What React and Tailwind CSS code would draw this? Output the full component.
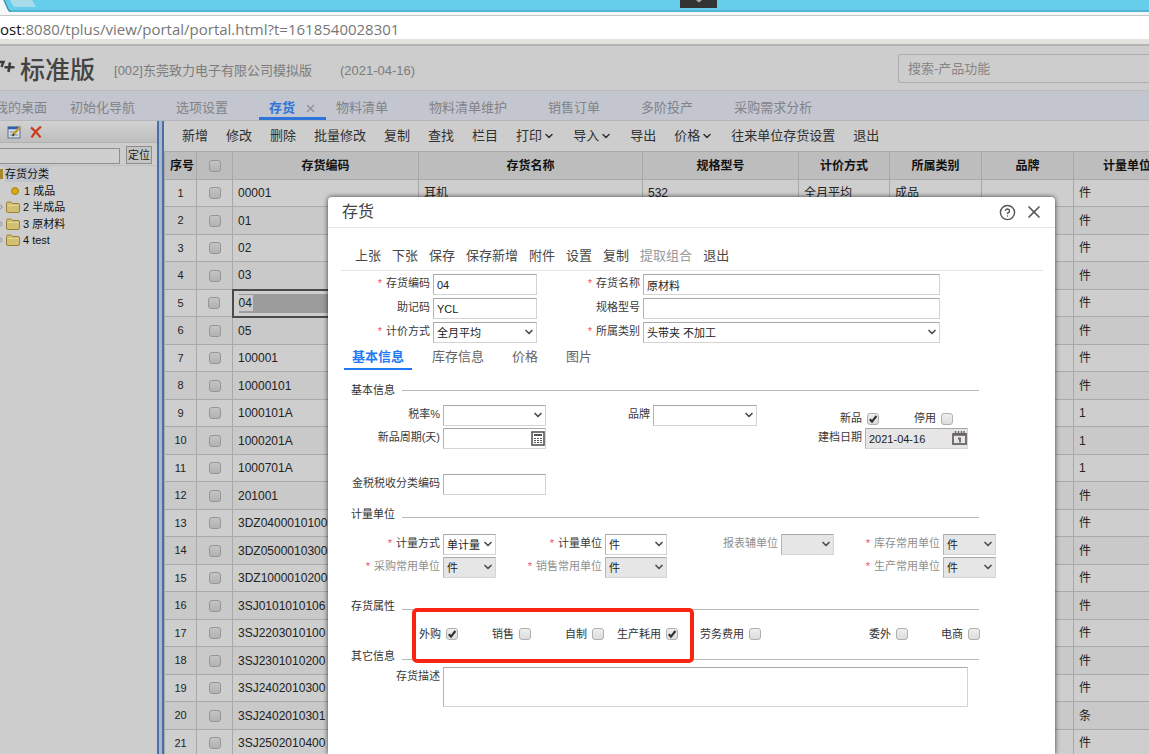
import { ChevronDown, CircleHelp, X } from 'lucide-react';
import clsx from 'clsx';

const openTabs = ['初始化导航', '选项设置', '存货', '物料清单', '物料清单维护', '销售订单', '多阶投产', '采购需求分析'];

const listActions = [
  { label: '新增' },
  { label: '修改' },
  { label: '删除' },
  { label: '批量修改' },
  { label: '复制' },
  { label: '查找' },
  { label: '栏目' },
  { label: '打印', menu: true },
  { label: '导入', menu: true },
  { label: '导出' },
  { label: '价格', menu: true },
  { label: '往来单位存货设置' },
  { label: '退出' },
];

const columns = ['存货编码', '存货名称', '规格型号', '计价方式', '所属类别', '品牌', '计量单位'];

const rows = [
  { code: '00001', name: '耳机', spec: '532', method: '全月平均', category: '成品', unit: '件' },
  { code: '01', unit: '件' },
  { code: '02', unit: '件' },
  { code: '03', unit: '件' },
  { code: '04', unit: '件', editing: true },
  { code: '05', unit: '件' },
  { code: '100001', unit: '件' },
  { code: '10000101', unit: '件' },
  { code: '1000101A', unit: '1' },
  { code: '1000201A', unit: '1' },
  { code: '1000701A', unit: '1' },
  { code: '201001', unit: '件' },
  { code: '3DZ0400010100', unit: '件' },
  { code: '3DZ0500010300', unit: '件' },
  { code: '3DZ1000010200', unit: '件' },
  { code: '3SJ0101010106', unit: '件' },
  { code: '3SJ2203010100', unit: '件' },
  { code: '3SJ2301010200', unit: '件' },
  { code: '3SJ2402010300', unit: '件' },
  { code: '3SJ2402010301', unit: '条' },
  { code: '3SJ2502010400', unit: '件' },
];

const dialogActions = ['上张', '下张', '保存', '保存新增', '附件', '设置', '复制', '提取组合', '退出'];

const attributes = [
  { id: 'buy', label: '外购', checked: true },
  { id: 'sell', label: '销售' },
  { id: 'make', label: '自制' },
  { id: 'consume', label: '生产耗用', checked: true },
  { id: 'service', label: '劳务费用' },
  { id: 'outsource', label: '委外' },
  { id: 'ecommerce', label: '电商' },
];

const Checkbox = ({ id, checked = false, dim = false, ...rest }) => (
  <span className="relative inline-block size-3 shrink-0">
    <input
      id={id}
      type="checkbox"
      defaultChecked={checked}
      className={clsx(
        'peer block size-3 appearance-none rounded-[3px] border',
        dim
          ? 'border-[#969696] bg-linear-to-b from-[#c4c4c4] to-[#b2b2b2]'
          : 'border-[#b0b0b0] bg-linear-to-b from-[#efefef] to-[#dcdcdc]'
      )}
      {...rest}
    />
    <svg
      viewBox="0 0 12 12"
      className="pointer-events-none absolute inset-0 hidden size-3 peer-checked:block"
      fill="none"
      stroke="#333"
      strokeWidth="2.2"
    >
      <path d="M2.8 6.2 5 8.6 9.4 3" />
    </svg>
  </span>
);

const Label = ({ htmlFor, required, muted, children }) => (
  <label
    htmlFor={htmlFor}
    className={clsx('text-right leading-[18px] whitespace-nowrap', muted ? 'text-[#8f8f8f]' : 'text-[#3a3a3a]')}
  >
    {required && <span className="mr-1 text-[#f0506a]">*</span>}
    {children}
  </label>
);

const fieldBox =
  'h-[21px] w-full rounded-none border border-t-[#a8a8a8] border-l-[#b4b4b4] border-r-[#d4d4d4] border-b-[#d4d4d4] pl-[3px] text-[#222] outline-none';

const TextField = ({ id, label, required, value = '' }) => (
  <>
    <Label htmlFor={id} required={required}>{label}</Label>
    <input id={id} type="text" defaultValue={value} className={clsx(fieldBox, 'bg-white')} />
  </>
);

const SelectField = ({ id, label, required, value = '', muted, disabled }) => (
  <>
    <Label htmlFor={id} required={required} muted={muted}>{label}</Label>
    <span className="relative block">
      <select
        id={id}
        disabled={disabled}
        defaultValue={value}
        className={clsx(fieldBox, 'block appearance-none pt-[2px] opacity-100', disabled ? 'bg-[#e6e6e6]' : 'bg-white')}
      >
        <option value={value}>{value}</option>
      </select>
      <ChevronDown
        size={12}
        strokeWidth={3.5}
        className="pointer-events-none absolute top-1 right-[2px] text-[#505050]"
      />
    </span>
  </>
);

const SectionTitle = ({ low, children }) => (
  <div className="mr-[76px] ml-[23px] flex h-4 items-center gap-[7px] text-[#333]">
    <h3 className="leading-4">{children}</h3>
    <span className={clsx('h-px flex-1 bg-[#b8b8b8]', low && 'mt-[6px]')} />
  </div>
);

const CalculatorIcon = () => (
  <svg viewBox="0 0 14 15" className="h-[15px] w-[14px]" fill="none" stroke="#555">
    <rect x="1" y="1" width="12" height="13" strokeWidth="1.6" />
    <path d="M3 4h8" strokeWidth="2" />
    <path d="M3 7.5h2M6 7.5h2M9 7.5h2M3 9.5h2M6 9.5h2M9 9.5h2M3 11.5h2M6 11.5h2M9 11.5h2" strokeWidth="1.2" />
  </svg>
);

const CalendarIcon = () => (
  <svg viewBox="0 0 15 14" className="h-[14px] w-[15px]" fill="none" stroke="#6b6464">
    <rect x="1" y="3" width="13" height="10" strokeWidth="1.8" />
    <path d="M1 3.5h13" strokeWidth="2.6" />
    <path d="M3.5 0v4M6.5 0v4M9.5 0v4M12 0v4" strokeWidth="1.4" />
    <path d="M6 7.5h2v4" strokeWidth="1.8" />
  </svg>
);

const FolderIcon = () => (
  <svg viewBox="0 0 14 12" className="h-3 w-3.5 shrink-0">
    <path
      d="M.5 10V2.5Q.5 1 2 1h3l1.5 1.5H12q1.5 0 1.5 1.5v6q0 1.5-1.5 1.5H2Q.5 11.5 .5 10Z"
      fill="#d3bf74"
      stroke="#9a8235"
    />
    <path d="M1.5 4.5h11" stroke="#e2d59c" />
  </svg>
);

const BrowserBar = () => (
  <div className="shrink-0 bg-[#f4f8f8]">
    <div className="relative h-3 border-b-2 border-[#55b3d6] bg-[#66cdea]">
      <svg viewBox="0 0 40 12" className="absolute top-0 left-0 h-3 w-10">
        <path d="M0 0h4l4 9q1 3 4 3H0Z" fill="#f4f8f8" />
        <path d="M4 0l4 9q1 2.500 3 2.500" fill="none" stroke="#4a93ad" strokeWidth="1.5" />
        <path d="M10 0h22l4 7H16q-3 0-4-3Z" fill="#a9dcea" />
      </svg>
      <div className="absolute top-0 left-[680px] flex h-2 w-[37px] justify-center bg-[#333]">
        <svg viewBox="0 0 8 4" className="h-1 w-2" fill="#aaa">
          <path d="M1 0h6L4 2.500Z" />
        </svg>
      </div>
    </div>
    <div className="mt-[3px] border-t border-[#c4c8ca] bg-white">
      <p className="h-[23px] font-[Open_Sans] text-[15px] leading-[26px] text-[#777]">
        <span className="text-[#111]">ost</span>:8080/tplus/view/portal/portal.html?t=1618540028301
      </p>
    </div>
    <div className="h-[5px] bg-[#e2e3df]" />
  </div>
);

const AppHeader = () => (
  <header className="flex h-[47px] shrink-0 items-center border-t-2 border-b border-t-[#b4b4b4] border-b-[#bdbdbd] bg-[#cdcdcd]">
    <svg viewBox="0 0 16 16" className="h-4 w-4 shrink-0" fill="none" stroke="#3d3d3d">
      <path d="M0 2h3.500L1.500 7" strokeWidth="2.4" />
      <path d="M10 2.500 8.500 12M4.500 7.200h10" strokeWidth="2.6" />
    </svg>
    <div className="ml-1 flex items-center pt-[3px] whitespace-nowrap">
      <h1 className="text-[25px] leading-8 font-medium text-[#444]">标准版</h1>
      <p className="ml-[19px] pt-[3px] text-[13px] text-[#7c7c7c]">[002]东莞致力电子有限公司模拟版</p>
      <p className="ml-7 pt-[3px] text-[13px] text-[#7c7c7c]">(2021-04-16)</p>
    </div>
    <input
      type="text"
      aria-label="搜索"
      placeholder="搜索-产品功能"
      className="ml-auto h-[29px] w-[251px] shrink-0 rounded-l-[3px] border border-r-0 border-[#aeaeae] pl-[9px] text-[13px] outline-none placeholder:text-[#858585]"
    />
  </header>
);

const TabStrip = () => (
  <nav className="flex h-[30px] shrink-0 overflow-hidden border-b border-[#b5b7bd] bg-[#c3c6cf] text-[13px] whitespace-nowrap text-[#818389]">
    <a href="#desktop" className="-ml-[5px] pt-[7px] pr-[13px] leading-5">我的桌面</a>
    {openTabs.map((tab) =>
      tab === '存货' ? (
        <div key={tab} className="flex gap-2 border-b-[3px] border-[#2f74d8] pt-[7px] pr-[9px] pl-2.5 leading-5">
          <a href="#inventory" className="font-bold text-[#2f74d8]">{tab}</a>
          <button type="button" aria-label="关闭" className="flex h-5 w-3.5 items-center justify-center text-[#8a8d94]">
            <X size={13} strokeWidth={2} />
          </button>
        </div>
      ) : (
        <a key={tab} href="#tab" className="pt-[7px] pr-[31px] pl-2.5 leading-5">{tab}</a>
      )
    )}
  </nav>
);

const treeRow = 'flex items-center odd:h-4 even:h-[17px]';

const Sidebar = () => (
  <aside className="w-[157px] shrink-0">
    <div className="flex h-[22px] items-center gap-2 border-b border-[#b2b2b2] bg-linear-to-b from-[#d2d2d2] to-[#bebebe] pl-[7px]">
      <button type="button" aria-label="修改分类">
        <svg viewBox="0 0 15 14" className="h-3.5 w-[15px]">
          <rect x="1" y="2" width="12" height="11" fill="#d6dbe2" stroke="#5d708c" />
          <path d="M1 3h12" stroke="#2c5fae" strokeWidth="2.5" />
          <path d="M3 7h5M3 10h8" stroke="#7d8ca2" />
          <path d="M6 10l7-8" stroke="#c29a2c" strokeWidth="2.2" />
          <path d="M5.5 11l1.5-2" stroke="#333" strokeWidth="1.5" />
        </svg>
      </button>
      <button type="button" aria-label="删除分类">
        <svg viewBox="0 0 12 12" className="size-3" fill="none" stroke="#c9401f" strokeWidth="2.2">
          <path d="M1 1.5Q6 5 10.5 11.5M11 .5Q5 5 1.5 11.5" />
        </svg>
      </button>
    </div>
    <form className="flex h-[23px] items-end justify-between border-b border-[#c0c0c0] pr-[5px] pb-px">
      <input
        type="text"
        aria-label="分类"
        className="h-4 w-[120px] border border-l-0 border-[#8e8e8e] bg-[#cfcfcf] outline-none"
      />
      <button
        type="button"
        className="h-[18px] border border-[#8e8e8e] bg-[#c4c4c4] px-px text-[11px] leading-4 text-[#222]"
      >
        定位
      </button>
    </form>
    <ul className="text-[11px] leading-4 text-[#111]">
      <li className={treeRow}>
        <span className="h-2.5 w-[3px] bg-[#a8872c]" />
        <span className="ml-0.5 bg-[#bfc3cb]">存货分类</span>
      </li>
      <li className={treeRow}>
        <span className="mr-[5px] ml-[11px] size-2 rounded-full border border-[#a8841a] bg-[#d6a90f]" />1 成品
      </li>
      {['2 半成品', '3 原材料', '4 test'].map((node) => (
        <li key={node} className={clsx(treeRow, 'gap-[3px]')}>
          <svg viewBox="0 0 3 6" className="h-1.5 w-[3px]" fill="none" stroke="#888">
            <path d="M0 .5 2.2 3 0 5.5" />
          </svg>
          <FolderIcon />
          {node}
        </li>
      ))}
    </ul>
  </aside>
);

const cell = 'overflow-hidden border border-[#a9a9a9] px-[5px] py-0 whitespace-nowrap';

const InventoryList = () => (
  <main className="min-w-0 flex-1 overflow-hidden">
    <div className="flex h-[30px] items-center gap-[18px] pl-[18px] text-[13px] whitespace-nowrap text-[#303030]">
      {listActions.map(({ label, menu }) => (
        <button key={label} type="button" className="flex items-center gap-px">
          {label}
          {menu && <ChevronDown size={12} strokeWidth={3} />}
        </button>
      ))}
    </div>
    <table className="w-[1016px] table-fixed border-collapse text-xs text-[#222]">
      <colgroup>
        <col className="w-8" />
        <col className="w-9" />
        <col className="w-[186px]" />
        <col className="w-[224px]" />
        <col className="w-[156px]" />
        <col className="w-[91px]" />
        <col className="w-[92px]" />
        <col className="w-[92px]" />
        <col className="w-[107px]" />
      </colgroup>
      <thead>
        <tr className="h-7 bg-[#bdbdbd] text-[#111]">
          <th className={clsx(cell, 'px-0')}>序号</th>
          <th className={cell}>
            <div className="flex justify-center"><Checkbox dim aria-label="全选" /></div>
          </th>
          {columns.map((name) => (
            <th key={name} className={cell}>{name}</th>
          ))}
        </tr>
      </thead>
      <tbody>
        {rows.map((row, i) => (
          <tr key={row.code} className="odd:h-[27px] odd:bg-[#cecece] even:h-7 even:bg-[#c9c9c9]">
            <td className={clsx(cell, 'text-center text-[11px]')}>{i + 1}</td>
            <td className={cell}>
              <div className="flex justify-center"><Checkbox dim aria-label={`选择 ${row.code}`} /></div>
            </td>
            {row.editing ? (
              <td className="border-2 border-[#4a4a4a] px-[5px] py-0">
                <div className="flex h-[19px] items-center bg-[#9c9c9c]">
                  <span className="bg-[#cacaca] pr-px">{row.code}</span>
                </div>
              </td>
            ) : (
              <td className={cell}>{row.code}</td>
            )}
            <td className={cell}>{row.name}</td>
            <td className={cell}>{row.spec}</td>
            <td className={cell}>{row.method}</td>
            <td className={cell}>{row.category}</td>
            <td className={cell} />
            <td className={cell}>{row.unit}</td>
          </tr>
        ))}
      </tbody>
    </table>
  </main>
);

const InventoryDialog = () => (
  <section
    role="dialog"
    aria-label="存货"
    className="absolute top-[197px] right-[94px] bottom-0 left-[328px] overflow-hidden rounded-t-[4px] bg-white text-[11px] shadow-[0_0_5px_rgba(0,0,0,0.7)]"
  >
    <header className="flex h-[31px] items-center border-b border-[#e6e6e6] pr-[11px] pl-[14px]">
      <h2 className="text-base text-[#444]">存货</h2>
      <div className="ml-auto flex items-center gap-2 text-[#555]">
        <button type="button" aria-label="帮助"><CircleHelp size={17} strokeWidth={2} /></button>
        <button type="button" aria-label="关闭"><X size={20} strokeWidth={2} /></button>
      </div>
    </header>

    <div className="mr-3 ml-[13px] flex h-[43px] items-end gap-[11px] border-b border-[#e6e6e6] pb-1 pl-[14px] text-[13px] leading-5 whitespace-nowrap text-[#484848]">
      {dialogActions.map((label) => (
        <button key={label} type="button" disabled={label === '提取组合'} className="disabled:text-[#999]">
          {label}
        </button>
      ))}
    </div>

    <div className="mt-[3px] grid grid-cols-[102px_104px_100px_297px] gap-x-[3px] gap-y-[3px]">
      <TextField id="code" label="存货编码" required value="04" />
      <TextField id="name" label="存货名称" required value="原材料" />
      <TextField id="mnemonic" label="助记码" value="YCL" />
      <TextField id="spec" label="规格型号" />
      <SelectField id="method" label="计价方式" required value="全月平均" />
      <SelectField id="category" label="所属类别" required value="头带夹 不加工" />
    </div>

    <nav className="mt-[2px] ml-4 flex h-[25px] gap-3 text-[13px] leading-6 text-[#666]">
      <a href="#basic" className="border-b-2 border-[#1f78f5] px-2 font-bold text-[#1f78f5]">基本信息</a>
      <a href="#stock" className="px-2">库存信息</a>
      <a href="#price" className="px-2">价格</a>
      <a href="#image" className="px-2">图片</a>
    </nav>

    <div className="mt-3">
      <SectionTitle>基本信息</SectionTitle>
      <div className="mt-[7px] grid grid-cols-[112px_103px_101px_104px_102px_103px] gap-x-[3px] gap-y-[2px]">
        <SelectField id="tax" label="税率%" />
        <SelectField id="brand" label="品牌" />
        <div className="col-span-2 flex items-end justify-end pr-[15px] pb-px text-[#333]">
          <label htmlFor="isNew" className="mr-[5px] leading-[14px]">新品</label>
          <Checkbox id="isNew" checked />
          <label htmlFor="disabled" className="mr-[5px] ml-[35px] leading-[14px]">停用</label>
          <Checkbox id="disabled" />
        </div>
        <Label htmlFor="period">新品周期(天)</Label>
        <span className="relative block">
          <input id="period" type="text" className={clsx(fieldBox, 'block bg-white')} />
          <button type="button" aria-label="计算器" className="absolute top-[3px] right-px"><CalculatorIcon /></button>
        </span>
        <span className="col-span-2" />
        <Label htmlFor="created">建档日期</Label>
        <span className="relative block">
          <input id="created" type="text" readOnly defaultValue="2021-04-16" className={clsx(fieldBox, 'block bg-[#e6e6e6]')} />
          <button type="button" aria-label="选择日期" className="absolute top-[3px] right-px"><CalendarIcon /></button>
        </span>
      </div>
      <div className="mt-[25px] grid grid-cols-[112px_103px] gap-x-[3px]">
        <TextField id="taxcode" label="金税税收分类编码" />
      </div>
    </div>

    <div className="mt-[11px]">
      <SectionTitle low>计量单位</SectionTitle>
      <div className="mt-3 grid grid-cols-[112px_53px_103px_62px_108px_53px_103px_53px] gap-x-[3px] gap-y-[2px]">
        <SelectField id="unitMode" label="计量方式" required value="单计量" />
        <SelectField id="unit" label="计量单位" required value="件" />
        <SelectField id="reportUnit" label="报表辅单位" muted disabled />
        <SelectField id="stockUnit" label="库存常用单位" required value="件" muted disabled />
        <SelectField id="buyUnit" label="采购常用单位" required value="件" muted disabled />
        <SelectField id="saleUnit" label="销售常用单位" required value="件" muted disabled />
        <span className="col-span-2" />
        <SelectField id="makeUnit" label="生产常用单位" required value="件" muted disabled />
      </div>
    </div>

    <div className="relative mt-5">
      <SectionTitle low>存货属性</SectionTitle>
      <div className="mt-3 grid h-4 grid-cols-[130px_73px_73px_74px_83px_147px_72px] text-[#333]">
        {attributes.map(({ id, label, checked }) => (
          <div key={id} className="flex items-center justify-end gap-[5px]">
            <label htmlFor={id}>{label}</label>
            <Checkbox id={id} checked={checked} />
          </div>
        ))}
      </div>
      {/* highlight around the first four attributes */}
      <div className="pointer-events-none absolute top-[10px] left-[84px] z-10 h-[55px] w-[282px] rounded-[5px] border-4 border-[#fb2412]" />
    </div>

    <div className="mt-[6px]">
      <SectionTitle low>其它信息</SectionTitle>
      <div className="mt-[3px] grid grid-cols-[112px_525px] gap-x-[3px]">
        <Label htmlFor="description">存货描述</Label>
        <textarea
          id="description"
          className="h-10 resize-none border border-t-[#a8a8a8] border-r-[#d4d4d4] border-b-[#d4d4d4] border-l-[#b4b4b4] outline-none"
        />
      </div>
    </div>
  </section>
);

const App = () => (
  <div className="relative flex h-screen flex-col overflow-hidden bg-[#cdcdcd] font-['Liberation_Sans','Noto_Sans_CJK_SC',sans-serif]">
    <BrowserBar />
    <AppHeader />
    <TabStrip />
    <div className="flex min-h-0 flex-1">
      <Sidebar />
      <div className="w-[7px] shrink-0 border-x-2 border-[#4a6ea6] bg-[#a9b8cc]" />
      <InventoryList />
    </div>
    <InventoryDialog />
  </div>
);

export default App;
